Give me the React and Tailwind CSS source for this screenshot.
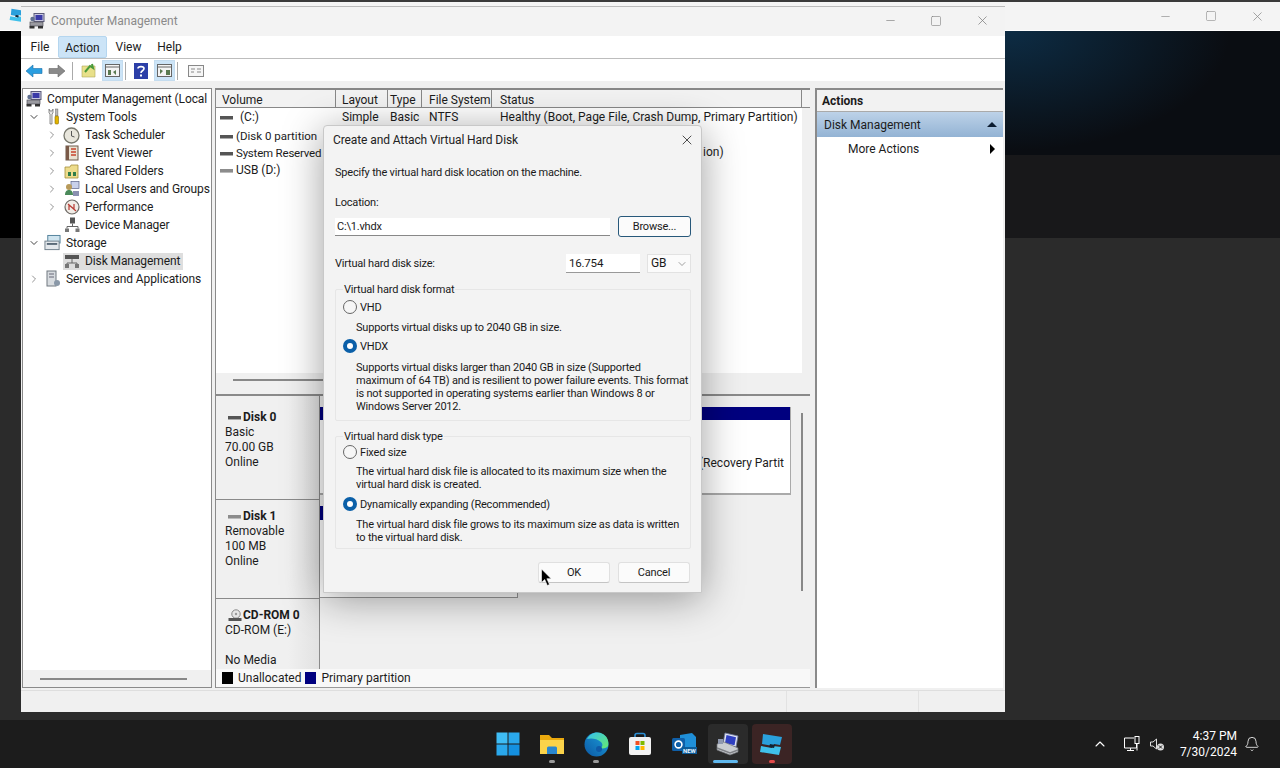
import { ChevronDown, ChevronRight, ChevronUp, Bell, X, Minus, Square } from 'lucide-react';

const ComputerIcon = ({ size = 16 }) => (
  <svg width={size} height={size} viewBox="0 0 16 16">
    <rect x="5" y="0.5" width="10" height="8" fill="#c8c8e0" stroke="#5a5a7a" />
    <rect x="6.5" y="2" width="7" height="5" fill="#3a3aa8" />
    <rect x="1" y="9" width="13" height="4" fill="#9a9aa0" stroke="#50505a" strokeWidth="0.7" />
    <rect x="0.5" y="13" width="5" height="2.5" fill="#333" />
    <rect x="9" y="13" width="5" height="2.5" fill="#333" />
    <circle cx="3.5" cy="6" r="2.2" fill="#5f6f8f" />
  </svg>
);

const ComputerTaskIcon = () => (
  <svg width="26" height="26" viewBox="0 0 26 26">
    <path d="M10 2l13 3-2 11-13-3z" fill="#dfe3f2" stroke="#70789a" strokeWidth="0.8" />
    <path d="M11.5 4l9.5 2.2-1.5 8L10 12z" fill="#2f3fc0" />
    <path d="M2 13l7-2 14 6v4l-8 3-13-5z" fill="#c9ccd0" stroke="#6a6d72" strokeWidth="0.7" />
    <path d="M2 17l13 5 8-3" fill="none" stroke="#7e8186" strokeWidth="1.4" />
    <rect x="3" y="8" width="5" height="5" fill="#8f98ae" />
  </svg>
);

const ToolsIcon = () => (
  <svg width="16" height="18" viewBox="0 0 16 18">
    <path d="M4 1v4l1 1v10h2V6l1-1V1L7 3H5z" fill="#e8e8e8" stroke="#666" strokeWidth="0.7" />
    <rect x="10.5" y="1" width="2.4" height="7" fill="#bbb" stroke="#666" strokeWidth="0.5" />
    <rect x="10" y="8" width="3.5" height="8" rx="1" fill="#e2b400" stroke="#8a6d00" strokeWidth="0.6" />
  </svg>
);

const ClockIcon = () => (
  <svg width="17" height="17" viewBox="0 0 17 17">
    <circle cx="8.5" cy="8.5" r="7.5" fill="#e8e6dc" stroke="#77776c" strokeWidth="1.3" />
    <path d="M8.5 4v5l3 1" fill="none" stroke="#555" strokeWidth="1" />
  </svg>
);

const ViewerIcon = () => (
  <svg width="16" height="16" viewBox="0 0 16 16">
    <rect x="2" y="1" width="12" height="14" fill="#e9e2d2" stroke="#6d5a4a" />
    <rect x="2" y="1" width="3" height="14" fill="#7a5a48" />
    <path d="M7 4h5M7 7h5M7 10h5" stroke="#c8442c" strokeWidth="1.4" />
  </svg>
);

const SharedIcon = () => (
  <svg width="16" height="16" viewBox="0 0 16 16">
    <path d="M1 4h5l1-2h7v13H1z" fill="#eddc8c" stroke="#a58f3c" strokeWidth="0.8" />
    <path d="M4 9h3v4H4zM9 9h3v4H9z" fill="#2f7d4a" />
  </svg>
);

const UsersIcon = () => (
  <svg width="16" height="16" viewBox="0 0 16 16">
    <rect x="7" y="0.5" width="8" height="7" fill="#c9d0ea" stroke="#5a6288" strokeWidth="0.7" />
    <circle cx="5" cy="6" r="3" fill="#b89a5a" />
    <path d="M1 14c0-4 2-5 4-5s4 1 4 5z" fill="#4a8a5a" />
    <rect x="9" y="10" width="6" height="5" fill="#8a90b0" />
  </svg>
);

const PerfIcon = () => (
  <svg width="16" height="16" viewBox="0 0 16 16">
    <circle cx="8" cy="8" r="7" fill="#f1ece6" stroke="#6e6a66" strokeWidth="1.2" />
    <path d="M4 5l8 7M5 11V6l5 4V5" fill="none" stroke="#b83a32" strokeWidth="1.2" />
  </svg>
);

const DeviceIcon = () => (
  <svg width="16" height="16" viewBox="0 0 16 16">
    <rect x="6" y="0.5" width="5" height="6" fill="#555" />
    <path d="M8.5 6.5v3M3 9.5h11M3 9.5v2M14 9.5v2" stroke="#666" fill="none" />
    <rect x="1" y="11.5" width="4" height="3.5" fill="#777" />
    <rect x="11.5" y="11.5" width="4" height="3.5" fill="#777" />
  </svg>
);

const StorageIcon = () => (
  <svg width="18" height="18" viewBox="0 0 18 18">
    <rect x="4" y="1" width="13" height="8" fill="#cfe4ef" stroke="#4f7f99" />
    <rect x="1" y="7" width="15" height="9" fill="#e4e8ec" stroke="#6f7f8a" />
    <rect x="3" y="9" width="11" height="2" fill="#5a6a78" />
  </svg>
);

const DiskMgmtIcon = () => (
  <svg width="16" height="16" viewBox="0 0 16 16">
    <rect x="1" y="2" width="14" height="4" fill="#555" />
    <path d="M8 6v4M3 10h10M3 10v1M13 10v1" stroke="#666" fill="none" />
    <rect x="1" y="11" width="4" height="4" fill="#777" />
    <rect x="11" y="11" width="4" height="4" fill="#777" />
  </svg>
);

const ServicesIcon = () => (
  <svg width="16" height="18" viewBox="0 0 16 18">
    <rect x="2" y="1" width="9" height="15" fill="#d8dce0" stroke="#707880" />
    <path d="M4 4h5M4 7h5" stroke="#667" />
    <circle cx="12" cy="13" r="3" fill="#8a98a8" />
  </svg>
);

const DiskGlyph = ({ light }) => (
  <span className={`inline-block shrink-0 w-[13px] h-[4px] border-b ${light ? 'bg-[#8c8c8c] border-[#bbb]' : 'bg-[#555] border-[#aaa]'}`} />
);

const CdGlyph = () => (
  <svg width="14" height="14" viewBox="0 0 14 14">
    <circle cx="8" cy="5" r="4.2" fill="#e6e6e6" stroke="#888" />
    <circle cx="8" cy="5" r="1.2" fill="#999" />
    <rect x="0.5" y="9" width="13" height="3" fill="#555" />
  </svg>
);

const Tree = [
  { label: 'Computer Management (Local', icon: <ComputerIcon />, level: 0 },
  { label: 'System Tools', icon: <ToolsIcon />, level: 1, open: true },
  { label: 'Task Scheduler', icon: <ClockIcon />, level: 2, closed: true },
  { label: 'Event Viewer', icon: <ViewerIcon />, level: 2, closed: true },
  { label: 'Shared Folders', icon: <SharedIcon />, level: 2, closed: true },
  { label: 'Local Users and Groups', icon: <UsersIcon />, level: 2, closed: true },
  { label: 'Performance', icon: <PerfIcon />, level: 2, closed: true },
  { label: 'Device Manager', icon: <DeviceIcon />, level: 2 },
  { label: 'Storage', icon: <StorageIcon />, level: 1, open: true },
  { label: 'Disk Management', icon: <DiskMgmtIcon />, level: 2, selected: true },
  { label: 'Services and Applications', icon: <ServicesIcon />, level: 1, closed: true },
];

const TreeRow = ({ item }) => {
  const pad = item.level === 0 ? 'pl-[2px]' : item.level === 1 ? 'pl-[5px]' : 'pl-[23px]';
  const gap = item.level === 0 ? '' : item.level === 1 ? 'ml-[4px]' : 'ml-[5px]';
  return (
    <div className={`flex items-center h-[18px] whitespace-nowrap tracking-[-0.1px] ${pad}`}>
      {item.level > 0 && (
        <span className="w-[12px] flex justify-center shrink-0">
          {item.open && <ChevronDown size={12} strokeWidth={2} className="text-[#444]" />}
          {item.closed && <ChevronRight size={12} strokeWidth={1.6} className="text-[#777]" />}
        </span>
      )}
      <div className={`flex items-center h-[17px] pr-[3px] ${gap} ${item.selected ? 'bg-[#dedede]' : ''}`}>
        <span className="flex justify-center items-center w-[17px] shrink-0">{item.icon}</span>
        <span className="ml-[5px] leading-[17px]">{item.label}</span>
      </div>
    </div>
  );
};

const columns = [
  ['Volume', 'w-[120px] pl-[6px]'],
  ['Layout', 'w-[52px] pl-[6px]'],
  ['Type', 'w-[34px] pl-[2px]'],
  ['File System', 'w-[70px] pl-[7px]'],
  ['Status', 'w-[310px] pl-[8px]'],
];

const DiskLabel = ({ h, pt, icon, title, lines, border = 'border-b' }) => (
  <div className={`${h} ${pt} w-[104px] shrink-0 pl-[9px] leading-[15px] bg-gradient-to-r from-[#f0f0f0] from-70% to-[#e2e2e2] border-r border-[#8a8a8a] overflow-hidden ${border}`}>
    <div className="flex items-center font-bold">
      <span className="w-[18px] pl-[3px] flex">{icon}</span>
      {title}
    </div>
    {lines.map((l, i) => (
      <div key={i} className="h-[15px]">{l}</div>
    ))}
  </div>
);

const Radio = ({ on }) =>
  on ? (
    <span className="w-[14px] h-[14px] rounded-full bg-[#0a5fa8] flex items-center justify-center shrink-0">
      <span className="w-[6px] h-[6px] rounded-full bg-white" />
    </span>
  ) : (
    <span className="w-[14px] h-[14px] rounded-full border border-[#666] bg-[#f6f6f6] shrink-0" />
  );

const RadioRow = ({ on, label }) => (
  <div className="flex items-center gap-[3px] h-[14px] -ml-[2px]">
    <Radio on={on} />
    <span>{label}</span>
  </div>
);

const Fieldset = ({ legend, className, children }) => (
  <div className={`relative border border-[#e6e6e6] rounded-[2px] pl-[9px] ${className}`}>
    <span className="absolute -top-[7px] left-[7px] bg-[#f3f3f3] px-[1px] leading-[13px]">{legend}</span>
    {children}
  </div>
);

const ActionBtn = ({ children }) => (
  <div className="w-[72px] h-[21px] rounded-[3px] bg-[#fbfbfb] border border-[#e0e0e0] border-b-[#c4c4c4] flex items-center justify-center">
    {children}
  </div>
);

const Dialog = () => (
  <div className="absolute left-[323px] top-[125px] w-[379px] h-[468px] bg-[#f3f3f3] border border-[#c8c8c8] rounded-t-[4px] shadow-[0_6px_40px_rgba(0,0,0,0.38)] text-[11px] text-[#1a1a1a] tracking-[-0.2px] leading-[13px]">
    <div className="h-[28px] flex items-center justify-between pl-[9px] pr-[6px] text-[12px] tracking-[-0.1px] text-[#222]">
      <span>Create and Attach Virtual Hard Disk</span>
      <X size={16} strokeWidth={1.2} className="text-[#222]" />
    </div>
    <div className="pl-[11px] pr-[10px]">
      <div className="pt-[12px]">Specify the virtual hard disk location on the machine.</div>
      <div className="pt-[17px]">Location:</div>
      <div className="flex items-center justify-between mt-[7px]">
        <div className="w-[275px] h-[18px] bg-white border-b border-[#888] flex items-center pl-[2px]">C:\1.vhdx</div>
        <div className="w-[73px] h-[21px] rounded-[3px] bg-[#fbfbfb] border border-[#27587a] flex items-center justify-center">Browse...</div>
      </div>
      <div className="flex items-center mt-[17px] h-[19px]">
        <span className="flex-1">Virtual hard disk size:</span>
        <div className="w-[74px] h-[19px] bg-white border-b border-[#999] flex items-center pl-[3px] text-[11.5px]">16.754</div>
        <div className="w-[44px] h-[19px] ml-[7px] bg-[#fbfbfb] border border-[#e2e2e2] flex items-center justify-between pl-[3px] pr-[2px] text-[12px]">
          GB
          <ChevronDown size={12} strokeWidth={1} className="text-[#444]" />
        </div>
      </div>
      <Fieldset legend="Virtual hard disk format" className="mt-[16px] h-[132px] pt-[10px]">
        <RadioRow label="VHD" />
        <div className="pl-[11px] mt-[7px]">Supports virtual disks up to 2040 GB in size.</div>
        <div className="mt-[5px]"><RadioRow on label="VHDX" /></div>
        <div className="pl-[11px] mt-[8px] w-[345px]">
          Supports virtual disks larger than 2040 GB in size (Supported maximum of 64 TB) and is resilient to power failure events. This format is not supported in operating systems earlier than Windows 8 or Windows Server 2012.
        </div>
      </Fieldset>
      <Fieldset legend="Virtual hard disk type" className="mt-[15px] h-[113px] pt-[8px]">
        <RadioRow label="Fixed size" />
        <div className="pl-[11px] mt-[6px] w-[345px]">The virtual hard disk file is allocated to its maximum size when the virtual hard disk is created.</div>
        <div className="mt-[6px]"><RadioRow on label="Dynamically expanding (Recommended)" /></div>
        <div className="pl-[11px] mt-[7px] w-[345px]">The virtual hard disk file grows to its maximum size as data is written to the virtual hard disk.</div>
      </Fieldset>
      <div className="flex justify-end gap-[8px] mt-[13px] mr-[1px]">
        <ActionBtn>OK</ActionBtn>
        <ActionBtn>Cancel</ActionBtn>
      </div>
    </div>
  </div>
);

const TaskIcon = ({ children, tile, dot, bar }) => (
  <div className={`relative w-[40px] h-[40px] mx-[2px] rounded-[4px] flex items-center justify-center ${tile || ''}`}>
    {children}
    {dot && <span className={`absolute bottom-[1px] left-[17px] w-[6px] h-[3px] rounded-full ${dot}`} />}
    {bar && <span className="absolute bottom-[1px] left-[5px] w-[25px] h-[3px] rounded-full bg-[#60b8ee]" />}
  </div>
);

const StartIcon = () => (
  <svg width="24" height="24" viewBox="0 0 24 24">
    <rect x="0.5" y="0.5" width="11" height="11" fill="#3fbdf5" />
    <rect x="12.5" y="0.5" width="11" height="11" fill="#2aa8ec" />
    <rect x="0.5" y="12.5" width="11" height="11" fill="#2aa8ec" />
    <rect x="12.5" y="12.5" width="11" height="11" fill="#1490e0" />
  </svg>
);

const FolderIcon = () => (
  <svg width="26" height="24" viewBox="0 0 26 24">
    <path d="M1 3h9l3 3h12v16H1z" fill="#eaa90e" />
    <path d="M1 8h24v14H1z" fill="#fbd34a" />
    <path d="M8 22v-6a1.5 1.5 0 0 1 1.5-1.5h7A1.5 1.5 0 0 1 18 16v6z" fill="#2a87cf" />
  </svg>
);

const EdgeIcon = () => (
  <svg width="25" height="25" viewBox="0 0 25 25">
    <defs>
      <linearGradient id="edge-a" x1="0" y1="1" x2="1" y2="0">
        <stop offset="0" stopColor="#0c59a4" />
        <stop offset="1" stopColor="#1c9fdc" />
      </linearGradient>
      <linearGradient id="edge-b" x1="0" y1="0" x2="1" y2="1">
        <stop offset="0" stopColor="#35c1f1" />
        <stop offset="1" stopColor="#66eb6e" />
      </linearGradient>
    </defs>
    <circle cx="12.5" cy="12.5" r="12" fill="url(#edge-a)" />
    <path d="M3 7C6 1 13-1 19 2c5 3 6 8 5 12-1 2-5 3-8 2 3-1 3-4 1-6C13 6 6 6 3 7z" fill="url(#edge-b)" />
    <circle cx="15" cy="17" r="3" fill="#0f5aa8" />
  </svg>
);

const StoreIcon = () => (
  <svg width="24" height="24" viewBox="0 0 24 24">
    <path d="M7 6V3.5A2 2 0 0 1 9 1.5h6a2 2 0 0 1 2 2V6" fill="none" stroke="#2d8fd4" strokeWidth="1.6" />
    <rect x="1" y="5" width="22" height="18" rx="2" fill="#f2f2f2" />
    <rect x="7.5" y="9" width="4" height="4" fill="#f25022" />
    <rect x="12.5" y="9" width="4" height="4" fill="#7fba00" />
    <rect x="7.5" y="14" width="4" height="4" fill="#00a4ef" />
    <rect x="12.5" y="14" width="4" height="4" fill="#ffb900" />
  </svg>
);

const OutlookIcon = () => (
  <svg width="26" height="24" viewBox="0 0 26 24">
    <path d="M9 3l12-2 4 4v14H9z" fill="#1f8fd8" />
    <rect x="1" y="6" width="13" height="13" rx="1.5" fill="#0f5fa8" />
    <circle cx="7.5" cy="12.5" r="3.4" fill="none" stroke="#fff" strokeWidth="1.6" />
    <rect x="11" y="15" width="15" height="7" fill="#0c5c9a" />
    <text x="12" y="21" fontSize="6" fontWeight="700" fill="#e8f4ff" fontFamily="Roboto, sans-serif">NEW</text>
  </svg>
);

const AppIcon = ({ size = 26 }) => (
  <svg width={size} height={size} viewBox="0 0 26 26">
    <path d="M4 3l19 3-2 8-6-1-1 2-11-2z" fill="#2aa0dc" />
    <path d="M2 15l11 2 1-2 8 1-2 8-19-3z" fill="#3fc0ea" />
    <path d="M11 13l5 1-1 3-5-1z" fill="#123" />
  </svg>
);

const Taskbar = () => (
  <div className="h-[48px] bg-[#1c1c1c] grid grid-cols-[1fr_auto_1fr] items-center">
    <div />
    <div className="flex items-center">
      <TaskIcon><StartIcon /></TaskIcon>
      <TaskIcon dot="bg-[#9a9a9a]"><FolderIcon /></TaskIcon>
      <TaskIcon dot="bg-[#9a9a9a]"><EdgeIcon /></TaskIcon>
      <TaskIcon><StoreIcon /></TaskIcon>
      <TaskIcon><OutlookIcon /></TaskIcon>
      <TaskIcon tile="bg-[#2b2b2b]" bar><ComputerTaskIcon /></TaskIcon>
      <TaskIcon tile="bg-[#3b2424]" dot="bg-[#e24a4a]"><AppIcon /></TaskIcon>
    </div>
    <div className="flex items-center justify-end text-white text-[12px]">
      <ChevronUp size={16} strokeWidth={1.6} />
      <svg className="ml-[15px]" width="18" height="18" viewBox="0 0 18 18" fill="none" stroke="#fff" strokeWidth="1">
        <path d="M11 3H1.5v10h12V9M7.5 13v2.5M4 15.5h7" />
        <rect x="12" y="1.5" width="4" height="7" />
        <path d="M14 8.5v7" />
      </svg>
      <svg className="ml-[8px]" width="16" height="16" viewBox="0 0 16 16" fill="none" stroke="#ddd" strokeWidth="1">
        <path d="M1.5 6v4h2.5l3.5 3V3L4 6z" />
        <circle cx="11.5" cy="11" r="3.5" fill="#ddd" stroke="none" />
        <path d="M10 9.5l3 3M13 9.5l-3 3" stroke="#1c1c1c" />
      </svg>
      <div className="ml-[15px] text-right leading-[16px]">
        <div>4:37 PM</div>
        <div>7/30/2024</div>
      </div>
      <Bell size={16} strokeWidth={1.2} className="ml-[7px] mr-[20px]" />
    </div>
  </div>
);

const Pointer = () => (
  <svg className="absolute left-[540px] top-[568px]" width="14" height="19" viewBox="0 0 14 19">
    <path d="M1.5 1v13.5l3.2-3 2.6 6 2.2-1-2.6-5.8h4.3z" fill="#000" stroke="#fff" strokeWidth="0.6" />
  </svg>
);

export default function App() {
  return (
    <div className="relative w-[1280px] h-[768px] overflow-hidden flex flex-col bg-[#2b2b2b] font-['Roboto',sans-serif]">
      <div className="h-[2px] bg-[#3a3a3a]" />
      <div className="h-[29px] bg-[#f4f4f4] flex justify-end items-center text-[#8a8a8a] border-b border-white">
        <Minus size={13} strokeWidth={1.2} className="mr-[33px]" />
        <Square size={12} strokeWidth={1.2} className="mr-[33px]" />
        <X size={15} strokeWidth={1.2} className="mr-[15px]" />
      </div>
      <div className="h-[124px] bg-[radial-gradient(ellipse_220px_120px_at_1010px_0px,#0d2c44,#0a0d12_100%)]" />
      <div className="h-[83px] bg-[#18181a]" />
      <div className="flex-1 bg-[#2b2b2b]" />
      <Taskbar />

      <div className="absolute left-[9px] top-[7px] w-[12px] h-[16px] overflow-hidden"><AppIcon size={16} /></div>
      <div className="absolute left-0 top-[31px] w-[21px] h-[207px] bg-black" />

      <div className="absolute left-[21px] top-[6px] w-[984px] h-[706px] flex flex-col bg-[#f0f0f0] text-[12px] text-[#1c1c1c]">
        <div className="h-[30px] shrink-0 bg-[#f3f3f3] border-t border-[#bbb] flex items-center pl-[8px] pb-[2px] text-[#8a8a8a]">
          <ComputerIcon />
          <span className="ml-[6px]">Computer Management</span>
          <div className="ml-auto flex items-center text-[#7d7d7d]">
            <span className="w-[46px] flex justify-center"><Minus size={13} strokeWidth={1.2} /></span>
            <span className="w-[46px] flex justify-center"><Square size={12} strokeWidth={1.2} /></span>
            <span className="w-[46px] flex justify-center"><X size={15} strokeWidth={1.2} /></span>
          </div>
        </div>

        <div className="h-[23px] shrink-0 bg-white border-b border-[#bdbdbd] flex items-center pl-[1px]">
          <span className="w-[36px] text-center">File</span>
          <span className="w-[49px] h-[22px] text-center leading-[22px] bg-[#cce4f7] border border-[#b5d6ef] rounded-[2px]">Action</span>
          <span className="w-[43px] text-center">View</span>
          <span className="w-[39px] text-center">Help</span>
        </div>

        <div className="h-[22px] shrink-0 bg-white flex items-center pl-[4px] pt-[1px]">
          <svg width="18" height="14" viewBox="0 0 18 14"><path d="M1 7l7-6v3.5h9v5H8V13z" fill="#2a9ee0" stroke="#1a6ea8" strokeWidth="0.6" /></svg>
          <svg className="ml-[5px]" width="18" height="14" viewBox="0 0 18 14"><path d="M17 7l-7-6v3.5H1v5h9V13z" fill="#8a8a8a" stroke="#666" strokeWidth="0.6" /></svg>
          <span className="ml-[6px] w-px h-[18px] bg-[#aaa]" />
          <svg className="ml-[8px]" width="15" height="15" viewBox="0 0 15 15"><path d="M1 3h13v11H1z" fill="#e8e08a" stroke="#b0a858" strokeWidth="0.6" /><path d="M4 9l5-6 3 2-1-4" fill="none" stroke="#4a9a3a" strokeWidth="2" /></svg>
          <span className="ml-[6px] w-[21px] h-[21px] bg-[#cce4f7] border border-[#c4dcef] flex items-center justify-center">
            <svg width="15" height="13" viewBox="0 0 15 13"><rect x="0.5" y="0.5" width="14" height="12" fill="#f4f4f4" stroke="#666" /><path d="M1 3h13" stroke="#666" /><path d="M3 6h3v5H3zM8 8l3-2v5z" fill="#5a7a50" /></svg>
          </span>
          <span className="ml-[2px] w-px h-[18px] bg-[#aaa]" />
          <svg className="ml-[8px]" width="14" height="16" viewBox="0 0 14 16"><rect width="14" height="16" fill="#2c3fa8" /><path d="M4 5.5C4 3 10 3 10 5.5 10 8 7 7.5 7 10" fill="none" stroke="#fff" strokeWidth="1.6" /><rect x="6" y="11.5" width="2" height="2" fill="#fff" /></svg>
          <span className="ml-[6px] w-[21px] h-[21px] bg-[#cce4f7] border border-[#c4dcef] flex items-center justify-center">
            <svg width="15" height="13" viewBox="0 0 15 13"><rect x="0.5" y="0.5" width="14" height="12" fill="#f4f4f4" stroke="#666" /><path d="M3 5l3 2-3 3zM9 6h4v5H9z" fill="#5a7a50" /><path d="M1 3h13" stroke="#666" /></svg>
          </span>
          <span className="ml-[2px] w-px h-[18px] bg-[#aaa]" />
          <svg className="ml-[10px]" width="16" height="12" viewBox="0 0 16 12"><rect x="0.5" y="0.5" width="15" height="11" fill="#f6f6f6" stroke="#888" /><path d="M3 4h4M3 7h3M9 4h4M9 7h4" stroke="#888" /></svg>
        </div>

        <div className="h-[7px] shrink-0 bg-[#f0f0f0]" />

        <div className="h-[600px] shrink-0 flex">
          <div className="w-[190px] ml-[1px] shrink-0 bg-white border border-[#8a8a8a] flex flex-col">
            <div className="flex-1 pt-[1px] overflow-hidden">
              {Tree.map((item) => (
                <TreeRow key={item.label} item={item} />
              ))}
            </div>
            <div className="h-[17px] bg-[#f0f0f0] flex items-center pl-[17px]">
              <span className="w-[147px] h-[2px] bg-[#888]" />
            </div>
          </div>

          <div className="w-[595px] ml-[3px] shrink-0 flex flex-col border-l border-[#8a8a8a] border-t-2 border-t-[#888]">
            <div className="h-[18px] shrink-0 flex bg-[#f2f2f2] border-b border-[#888] leading-[20px]">
              {columns.map(([name, w]) => (
                <div key={name} className={`${w} border-r border-[#888] shrink-0`}>{name}</div>
              ))}
            </div>
            <div className="h-[265px] shrink-0 bg-white flex">
              <div className="w-[586px] pt-[1px] shrink-0 overflow-hidden leading-[17px] whitespace-nowrap">
                <div className="flex h-[19px]">
                  <div className="w-[120px] h-[17px] flex items-center pl-[4px] shrink-0">
                    <DiskGlyph />
                    <span className="pl-[7px]">(C:)</span>
                  </div>
                  <div className="w-[52px] pl-[6px] shrink-0">Simple</div>
                  <div className="w-[34px] pl-[2px] shrink-0">Basic</div>
                  <div className="w-[70px] pl-[7px] shrink-0">NTFS</div>
                  <div className="pl-[8px] shrink-0">Healthy (Boot, Page File, Crash Dump, Primary Partition)</div>
                </div>
                <div className="flex h-[17px]">
                  <div className="w-[107px] flex items-center pl-[4px] shrink-0">
                    <DiskGlyph />
                    <span className="pl-[3px] text-[11.5px]">(Disk 0 partition</span>
                  </div>
                </div>
                <div className="flex h-[17px]">
                  <div className="w-[107px] flex items-center pl-[4px] shrink-0">
                    <DiskGlyph />
                    <span className="pl-[3px] text-[11.5px] tracking-[-0.2px]">System Reserved</span>
                  </div>
                  <div className="w-[380px] shrink-0" />
                  <div className="-mt-[1px]">ion)</div>
                </div>
                <div className="flex h-[17px]">
                  <div className="w-[107px] flex items-center pl-[4px] shrink-0">
                    <DiskGlyph light />
                    <span className="pl-[3px]">USB (D:)</span>
                  </div>
                </div>
              </div>
              <div className="flex-1 bg-[#f0f0f0]" />
            </div>
            <div className="h-[23px] shrink-0 bg-[#f0f0f0] pt-[6px] pl-[17px] border-b-2 border-[#8a8a8a]">
              <span className="block w-[300px] h-[2px] bg-[#888]" />
            </div>

            <div className="flex-1 flex min-h-0">
              <div className="w-[585px] shrink-0">
                <div className="flex h-[104px]">
                  <DiskLabel h="h-[104px]" pt="pt-[14px]" icon={<DiskGlyph />} title="Disk 0" lines={['Basic', '70.00 GB', 'Online']} />
                  <div className="flex-1 pt-[11px] pr-[10px]">
                    <div className="h-[88px] bg-white border-b-2 border-r border-[#aaa] flex flex-col">
                      <div className="h-[13px] bg-[#00007f]" />
                      <div className="flex-1 flex items-start justify-end pt-[36px] pr-[6px] whitespace-nowrap overflow-hidden leading-[15px]">(Recovery Partit</div>
                    </div>
                  </div>
                </div>
                <div className="flex h-[99px]">
                  <DiskLabel h="h-[99px]" pt="pt-[9px]" icon={<DiskGlyph light />} title="Disk 1" lines={['Removable', '100 MB', 'Online']} />
                  <div className="flex-1 pt-[6px]">
                    <div className="w-[198px] h-[92px] bg-white border-b border-r border-[#999]">
                      <div className="h-[14px] bg-[#00007f]" />
                    </div>
                  </div>
                </div>
                <div className="flex h-[70px]">
                  <DiskLabel h="h-[70px]" pt="pt-[9px]" border="" icon={<CdGlyph />} title="CD-ROM 0" lines={['CD-ROM (E:)', '', 'No Media']} />
                </div>
              </div>
              <div className="flex-1 pt-[17px] bg-[#f0f0f0]">
                <span className="block w-[2px] h-[178px] bg-[#888]" />
              </div>
            </div>

            <div className="h-[19px] shrink-0 flex items-center bg-[#f8f8f8] pl-[6px] border-b border-[#999]">
              <span className="w-[11px] h-[12px] bg-black" />
              <span className="ml-[5px]">Unallocated</span>
              <span className="ml-[4px] w-[11px] h-[12px] bg-[#00007f]" />
              <span className="ml-[5px]">Primary partition</span>
            </div>
          </div>

          <div className="w-[188px] ml-[5px] shrink-0 bg-white border-l-2 border-[#8a8a8a] border-t-2 border-t-[#8a8a8a] flex flex-col">
            <div className="h-[22px] shrink-0 bg-[#f2f2f2] border-b border-[#aaa] pl-[5px] leading-[23px] font-bold">Actions</div>
            <div className="h-[25px] shrink-0 bg-gradient-to-b from-[#bdd2e8] to-[#93b3d4] flex items-center justify-between pl-[7px] pr-[6px]">
              Disk Management
              <span className="w-0 h-0 border-x-[5px] border-x-transparent border-b-[5px] border-b-[#0c1c30]" />
            </div>
            <div className="h-[24px] shrink-0 flex items-center justify-between pl-[31px] pr-[8px]">
              More Actions
              <span className="w-0 h-0 border-y-[5px] border-y-transparent border-l-[5px] border-l-black" />
            </div>
          </div>
        </div>

        <div className="flex-1 flex justify-end border-t border-[#dedede] mt-[2px]">
          <span className="w-[133px] border-l border-r border-[#e2e2e2]" />
          <span className="w-[86px]" />
        </div>
      </div>

      <Dialog />
      <Pointer />
    </div>
  );
}
